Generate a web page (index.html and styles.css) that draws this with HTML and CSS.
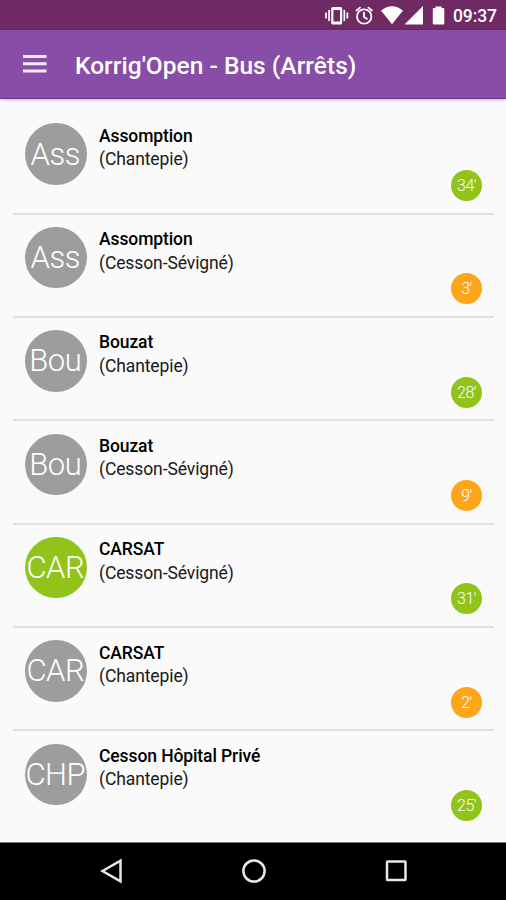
FILE: index.html
```
<!DOCTYPE html>
<html lang="fr">
<head>
<meta charset="utf-8">
<title>Korrig'Open - Bus (Arrêts)</title>
<link rel="stylesheet" href="styles.css">
</head>
<body>
<div class="status">
  <svg class="status-icons" width="130" height="30" viewBox="0 0 130 30" fill="#fff">
    <g transform="translate(3.200 0)">
      <path fill-rule="evenodd" d="M13.500 7h8q1.500 0 1.500 1.500v14.500q0 1.500-1.500 1.500h-8q-1.500 0-1.500-1.500v-14.500q0-1.500 1.500-1.500zM14.200 10v11.500h6.600v-11.500z"/>
      <path d="M9 10h1.700v11h-1.700zM6 12.500h1.700v6h-1.700zM24.300 10h1.700v11h-1.700zM27.300 12.500h1.700v6h-1.700z"/>
    </g>
    <g fill="none" stroke="#fff" stroke-width="1.800"><circle cx="48.200" cy="16.500" r="7.200"/><path d="M48 12v5l3.500 2.200M40 11l4.500-3.900M56.400 11l-4.500-3.900"/></g>
    <path d="M65 10.500q11-8.500 22 0l-11 13.700zM107 6v18.500h-18.500zM119.500 6.500v1.500h-1.700q-1 0-1 1v14.500q0 1 1 1h9.500q1 0 1-1v-14.500q0-1-1-1h-1.700v-1.500z"/>
  </svg>
  <span class="clock">09:37</span>
</div>
<header class="bar">
  <svg class="menu" width="24" height="18" viewBox="0 0 24 18" fill="#f3e9f8"><path d="M0 0h23.500v3h-23.500zM0 7.300h23.500v3h-23.500zM0 14.600h23.500v3h-23.500z"/></svg>
  <h1>Korrig'Open - Bus (Arrêts)</h1>
</header>
<main class="list">
  <article class="stop"><div class="avatar">Ass</div><div class="info"><b>Assomption</b><span>(Chantepie)</span></div><div class="time green">34'</div></article>
  <article class="stop"><div class="avatar">Ass</div><div class="info"><b>Assomption</b><span>(Cesson-Sévigné)</span></div><div class="time">3'</div></article>
  <article class="stop"><div class="avatar">Bou</div><div class="info"><b>Bouzat</b><span>(Chantepie)</span></div><div class="time green">28'</div></article>
  <article class="stop"><div class="avatar">Bou</div><div class="info"><b>Bouzat</b><span>(Cesson-Sévigné)</span></div><div class="time">9'</div></article>
  <article class="stop"><div class="avatar green">CAR</div><div class="info"><b>CARSAT</b><span>(Cesson-Sévigné)</span></div><div class="time green">31'</div></article>
  <article class="stop"><div class="avatar">CAR</div><div class="info"><b>CARSAT</b><span>(Chantepie)</span></div><div class="time">2'</div></article>
  <article class="stop"><div class="avatar">CHP</div><div class="info"><b>Cesson Hôpital Privé</b><span>(Chantepie)</span></div><div class="time green">25'</div></article>
</main>
<nav class="nav">
  <svg width="24" height="26" viewBox="0 0 24 26"><path d="M2.500 13l18-10.300v20.600z"/></svg>
  <svg width="26" height="26" viewBox="0 0 26 26"><circle cx="13" cy="13" r="10.600"/></svg>
  <svg width="24" height="26" viewBox="0 0 24 26"><rect x="3" y="3.500" width="18.500" height="18.500" rx=".5"/></svg>
</nav>
</body>
</html>
```
FILE: styles.css
```
* { box-sizing: border-box; }
body {
  margin: 0;
  width: 506px;
  height: 900px;
  overflow: hidden;
  display: flex;
  flex-direction: column;
  background: #fafafa;
  font-family: Roboto, sans-serif;
  color: #181818;
}
.status {
  flex: none;
  height: 30px;
  background: #6f2963;
  display: flex;
  justify-content: flex-end;
  padding-right: 9px;
  color: #fff;
}
.status-icons { margin-right: 7px; }
.clock { width: 44px; font-size: 17.5px; font-weight: 500; line-height: 32px; white-space: nowrap; letter-spacing: -.1px; }
.bar {
  flex: none;
  height: 69px;
  background: #884da7;
  border-bottom: 1px solid #73358f;
  box-shadow: 0 1px 3px rgba(0, 0, 0, .25);
  display: flex;
  align-items: center;
  padding-left: 23px;
  color: #fff;
}
.menu { margin-right: 28px; }
h1 { margin: 0; font-size: 24.5px; font-weight: 500; line-height: 34px; padding-top: 3px; white-space: nowrap; letter-spacing: .03px; }
.list { flex: none; height: 743px; padding: 12.3px 12px 0 13px; }
.stop {
  height: 103.35px;
  display: flex;
  border-bottom: 2px solid #e0e0e0;
  padding: 12.2px 12px 0;
}
.stop:last-child { border: 0; }
.avatar {
  flex: none;
  width: 62px;
  height: 61.5px;
  border-radius: 50%;
  background: #9d9d9d;
  color: #fff;
  display: flex;
  align-items: center;
  justify-content: center;
  font-size: 31px;
  font-weight: 300;
  letter-spacing: -.5px;
  padding-right: 1.5px;
}
.info { flex: 1; margin: 1.300px 0 0 12px; display: flex; flex-direction: column; font-size: 17.5px; line-height: 23.500px; letter-spacing: -.1px; }
.info b { font-weight: 500; color: #000; }
.time {
  width: 31px;
  height: 31px;
  margin-top: 46.5px;
  border-radius: 50%;
  background: #fea519;
  color: #fff;
  font-size: 16px;
  font-weight: 300;
  letter-spacing: -.5px;
  display: flex;
  align-items: center;
  justify-content: center;
}
.green { background: #92c31b; }
.nav {
  flex: none;
  height: 58px;
  background: #000;
  border-top: 1px solid #777;
  display: flex;
  justify-content: space-between;
  padding: 15px 98px 0 100px;
}
.nav svg { fill: none; stroke: #e8e8e8; stroke-width: 2.500; }
```
